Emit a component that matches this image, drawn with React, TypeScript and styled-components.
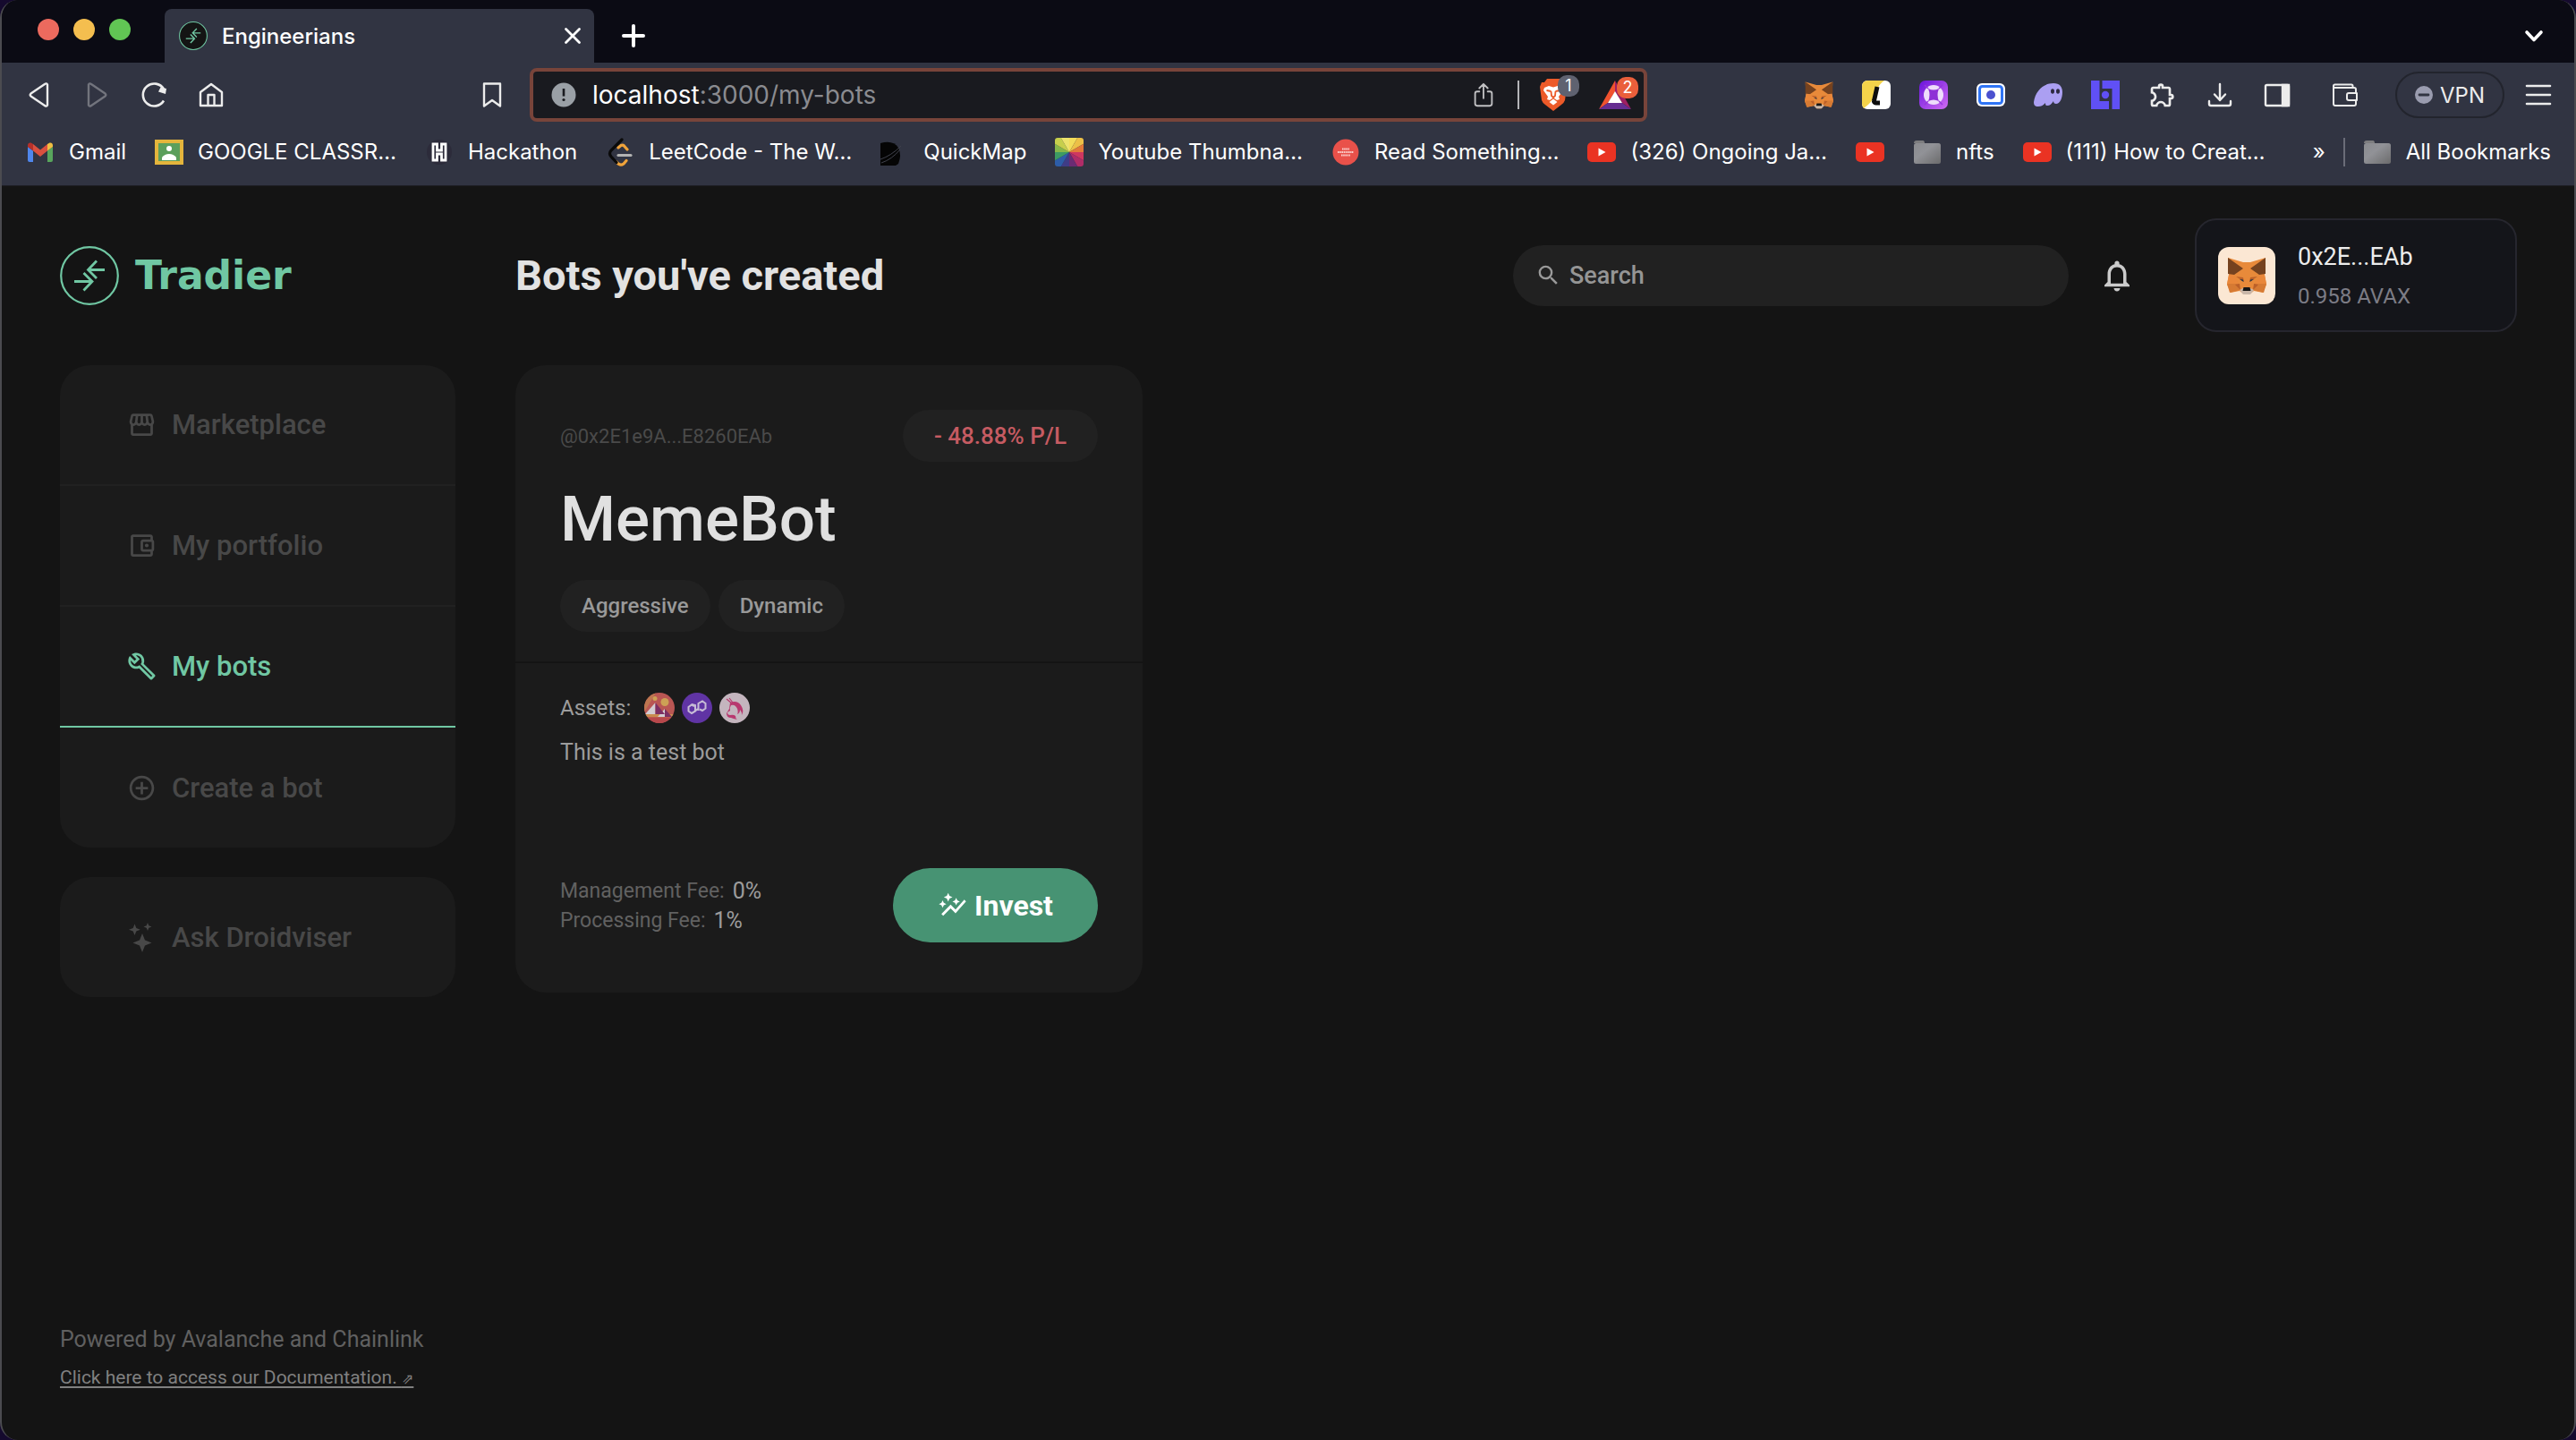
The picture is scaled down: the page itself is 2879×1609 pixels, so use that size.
import React from "react";
import styled, { createGlobalStyle } from "styled-components";
import {
  MdOutlineStorefront,
  MdOutlineAccountBalanceWallet,
  MdOutlineBuild,
  MdOutlineAddCircleOutline,
  MdOutlineAutoGraph,
  MdNotificationsNone,
  MdSearch,
  MdOutlineExtension,
} from "react-icons/md";
import { IoShareOutline } from "react-icons/io5";

const color = {
  page: "#141414",
  panel: "#1b1b1b",
  raised: "#212121",
  accent: "#70c7a3",
  chrome: "#313442",
  strip: "#0b0b14",
};

const GlobalStyle = createGlobalStyle`
  *, *::before, *::after { box-sizing: border-box; }
  body { margin: 0; background: #150a2e; }
  a { color: inherit; text-decoration: none; }
  button { padding: 0; border: 0; background: none; color: inherit; font: inherit; cursor: pointer; }
  h1, h2, p, dl, dd { margin: 0; font-weight: inherit; font-size: inherit; }
  svg { display: block; flex: none; }
`;

const Window = styled.div`
  display: flex;
  flex-direction: column;
  min-height: 100vh;
  overflow: hidden;
  border: solid #4b4b50;
  border-width: 0 2px;
  border-radius: 20px;
  background: ${color.page};
  font-family: Inter, sans-serif;
`;

/* ---------- browser chrome ---------- */

const TabStrip = styled.div`
  display: flex;
  align-items: center;
  height: 70px;
  padding: 0 29px 0 40px;
  background: ${color.strip};
  color: #fff;
`;

const Lights = styled.div`
  display: flex;
  gap: 16px;
  margin: 0 38px 4px 0;
`;

const Light = styled.button<{ $fill: string }>`
  width: 24px;
  height: 24px;
  border-radius: 50%;
  background: ${(p) => p.$fill};
`;

const Tab = styled.div`
  display: flex;
  align-items: center;
  gap: 16px;
  align-self: flex-end;
  width: 480px;
  height: 60px;
  padding: 0 14px 0 16px;
  border-radius: 8px 8px 0 0;
  background: ${color.chrome};
  font-size: 24px;
  font-weight: 500;
`;

const TabClose = styled.button`
  margin-left: auto;
`;

const NewTab = styled.button`
  margin-left: 28px;
  margin-top: 10px;
`;

const TabMenu = styled.button`
  margin-left: auto;
  margin-top: 10px;
`;

const Toolbar = styled.div`
  display: flex;
  align-items: center;
  height: 72px;
  padding: 0 24px 0 26px;
  background: ${color.chrome};
  color: #ececec;
`;

const NavButtons = styled.div`
  display: flex;
  gap: 32px;
  width: 538px;
  margin-right: 26px;

  button:last-child {
    margin-left: auto;
  }
`;

const IconButton = styled.button<{ $dim?: boolean }>`
  position: relative;
  flex: none;
  opacity: ${(p) => (p.$dim ? 0.35 : 1)};
`;

const AddressBar = styled.div`
  display: flex;
  flex: 1;
  align-items: center;
  height: 60px;
  padding: 0 14px 0 20px;
  border: 4px solid #78443a;
  border-radius: 8px;
  background: #191a1f;
`;

const Address = styled.div`
  flex: 1;
  margin-left: 18px;
  color: #fff;
  font-size: 28px;
  line-height: 40px;
  outline: none;
`;

const AddressPath = styled.span`
  color: #8a8b90;
`;

const AddressTools = styled.div`
  display: flex;
  align-items: center;
  color: #c0c0c2;
`;

const ToolRule = styled.i<{ $space: number; $tint: string }>`
  width: 2px;
  height: 32px;
  margin: 0 ${(p) => p.$space}px;
  background: ${(p) => p.$tint};
`;

const Shields = styled(IconButton)`
  width: 66px;
`;

const Badge = styled.span<{ $fill: string }>`
  position: absolute;
  top: -4px;
  left: 20px;
  min-width: 24px;
  height: 24px;
  border-radius: 10px;
  background: ${(p) => p.$fill};
  color: #fff;
  font-size: 18px;
  line-height: 24px;
  text-align: center;
`;

const Extensions = styled.div`
  display: flex;
  align-items: center;
  gap: 32px;
  margin-left: 176px;
`;

const VpnButton = styled.button`
  display: flex;
  align-items: center;
  justify-content: center;
  gap: 8px;
  width: 122px;
  height: 52px;
  margin: 0 -10px 0 8px;
  border: 2px solid #22242d;
  border-radius: 26px;
  font-size: 24px;
`;

const WalletSlot = styled.div`
  display: flex;
  margin-left: 12px;
`;

const BookmarkBar = styled.nav`
  display: flex;
  align-items: center;
  gap: 32px;
  height: 66px;
  padding: 0 26px 10px 27px;
  border-bottom: 1px solid #1d1e24;
  background: ${color.chrome};
  color: #fff;
  font-size: 24px;
  white-space: nowrap;
`;

const Bookmark = styled.a`
  display: flex;
  align-items: center;
  gap: 16px;
`;

const BookmarkEnd = styled.div`
  display: flex;
  align-items: center;
  margin-left: auto;
`;

/* ---------- application ---------- */

const Shell = styled.div`
  display: grid;
  flex: 1;
  grid-template: auto 1fr / 442px 1fr;
  gap: 37px 67px;
  padding: 36px 64px 50px 65px;
  font-family: Roboto, sans-serif;
`;

const Brand = styled.a`
  display: flex;
  align-items: center;
  gap: 18px;
  color: ${color.accent};
  font-family: "DejaVu Sans", sans-serif;
  font-size: 44px;
  font-weight: 700;
  line-height: 56px;
`;

const Header = styled.header`
  display: flex;
  align-items: center;
  min-height: 127px;
`;

const PageTitle = styled.h1`
  color: #e2e2e2;
  font-size: 47px;
  font-weight: 700;
  line-height: 56px;
`;

const SearchBox = styled.label`
  display: flex;
  align-items: center;
  gap: 9px;
  width: 621px;
  height: 68px;
  margin-left: auto;
  padding: 0 25px;
  border-radius: 34px;
  background: ${color.raised};
  color: #999;
`;

const SearchInput = styled.input`
  flex: 1;
  min-width: 0;
  padding: 0;
  border: 0;
  outline: none;
  background: none;
  color: #ddd;
  font: 500 27px/34px Roboto, sans-serif;

  &::placeholder {
    color: #959595;
    opacity: 1;
  }
`;

const BellButton = styled.button`
  margin: 0 66px 0 33px;
  color: #cbcbcb;
`;

const Account = styled.button`
  display: flex;
  align-items: center;
  gap: 25px;
  width: 360px;
  height: 127px;
  padding: 0 24px;
  border: 2px solid #26262e;
  border-radius: 24px;
  background: #14151a;
  text-align: left;
`;

const Avatar = styled.span`
  display: grid;
  place-items: center;
  width: 64px;
  height: 64px;
  border-radius: 12px;
  background: #fbe7d3;
`;

const AccountText = styled.span`
  padding-top: 3px;
  line-height: 44px;
`;

const AccountName = styled.span`
  display: block;
  color: #ececec;
  font-size: 27px;
`;

const AccountBalance = styled.span`
  display: block;
  color: #7c7c85;
  font-size: 24px;
`;

const Sidebar = styled.aside`
  display: flex;
  flex-direction: column;
  gap: 33px;
`;

const Menu = styled.nav`
  overflow: hidden;
  border-radius: 34px;
  background: ${color.panel};
`;

const MenuItem = styled.a<{ $active?: boolean }>`
  display: flex;
  align-items: center;
  gap: 17px;
  height: 135px;
  padding-left: 75px;
  border-bottom: 2px solid ${(p) => (p.$active ? color.accent : color.raised)};
  color: ${(p) => (p.$active ? color.accent : "#484848")};
  font-size: 31px;
  font-weight: 500;

  &:last-child {
    height: 134px;
    border-bottom: 0;
  }
`;

const Footer = styled.footer`
  margin-top: auto;
  color: #606060;
  font-size: 25px;
  line-height: 44px;
`;

const DocsLink = styled.a`
  display: block;
  color: #808080;
  font-size: 21px;
  line-height: 40px;
  text-decoration: underline;
  text-decoration-thickness: 2px;
  text-underline-offset: 3px;
`;

const SmallArrow = styled.span`
  font: 16px "DejaVu Sans", sans-serif;
`;

const BotGrid = styled.main`
  display: grid;
  grid-template-columns: repeat(3, 1fr);
  gap: 67px;
  align-items: start;
`;

const Card = styled.article`
  display: flex;
  flex-direction: column;
  aspect-ratio: 1;
  border-radius: 34px;
  background: ${color.panel};
`;

const CardTop = styled.div`
  padding: 50px 50px 33px;
  border-bottom: 2px solid ${color.page};
`;

const CardMeta = styled.div`
  display: flex;
  align-items: center;
  justify-content: space-between;
  color: #4a4a4a;
  font-size: 22px;
`;

const Pill = styled.span`
  display: inline-flex;
  align-items: center;
  height: 58px;
  padding: 0 24px;
  border-radius: 29px;
  background: ${color.raised};
  color: #999;
  font-size: 24px;
  font-weight: 500;
`;

const ProfitPill = styled(Pill)`
  padding: 0 35px;
  color: #c65b62;
  font-size: 26px;
`;

const BotName = styled.h2`
  padding-bottom: 4px;
  color: #e0e0e0;
  font-size: 71px;
  font-weight: 500;
  line-height: 128px;
`;

const Tags = styled.div`
  display: flex;
  gap: 9px;
`;

const CardBody = styled.div`
  display: flex;
  flex: 1;
  flex-direction: column;
  gap: 16px;
  padding: 33px 50px 56px;
  color: #9c9c9c;
  font-size: 25px;
  line-height: 34px;
`;

const Assets = styled.div`
  display: flex;
  align-items: center;
  gap: 8px;
  font-size: 24px;
`;

const AssetsLabel = styled.span`
  margin-right: 7px;
`;

const CardFoot = styled.div`
  display: flex;
  align-items: center;
  justify-content: space-between;
  margin-top: auto;
`;

const Fees = styled.dl`
  font-size: 23px;
  line-height: 33px;
`;

const Fee = styled.div`
  display: flex;
  gap: 9px;
  color: #616161;

  dd {
    color: #9c9c9c;
    font-size: 25px;
  }
`;

const InvestButton = styled.button`
  display: flex;
  align-items: center;
  justify-content: center;
  gap: 8px;
  width: 229px;
  height: 83px;
  border-radius: 42px;
  background: #479373;
  color: #fff;
  font-size: 32px;
  font-weight: 700;
`;

/* ---------- drawings ---------- */

const BrandMark = ({ size, fill = "none" }: { size: number; fill?: string }) => (
  <svg width={size} height={size} viewBox="0 0 66 66" fill={fill} stroke={color.accent} strokeWidth="2.2">
    <circle cx="33" cy="33" r="31.8" />
    <path d="M50 26.5H32M41 16.5 31.5 26.5 41 36M16 39.5h19M26.500 30 36 39.500 26.500 49.500" fill="none" strokeWidth="2.800" />
  </svg>
);

const Fox = ({ size }: { size: number }) => (
  <svg width={size} height={size} viewBox="0 0 44 42">
    <path d="M1 1l17 5h8l17-5-1 19 2 11-4 9-10-2-5 4h-6l-5-4-10 2-4-9 2-11z" fill="#e88a3a" />
    <path d="M1 1l17 12-10 7-7-1z M43 1L26 13l10 7 7-1z" fill="#75421f" />
    <path d="M2 20l6 0 5 10-13 0z M42 20h-6l-5 10h13z" fill="#e9873a" />
    <path d="M0 30h13l2 7-12 3z M44 30H31l-2 7 12 3z" fill="#d67a33" />
    <path d="M10 22l8 1 1 5z M34 22l-8 1-1 5z M9 31l6 6-1-7z M35 31l-6 6 1-7z" fill="#bb6029" />
    <path d="M14 25l4 .5.500 2.500z M30 25l-4 .5-.5 2.500z" fill="#233447" />
    <path d="M14 37l4-2h8l4 2-4 5h-8z" fill="#c9b7a9" />
    <path d="M18.500 34h7l1 4h-9z" fill="#161616" />
  </svg>
);

const Sparkles = () => (
  <svg width="33" height="33" viewBox="0 0 33 33" fill="currentColor">
    <path d="M17 12l3 7.500 7.500 3-7.500 3-3 7.500-3-7.500-7.500-3 7.500-3zM8.500 1.500l1.800 4.500 4.500 1.800-4.500 1.800-1.800 4.500-1.800-4.500L2 7.800 6.700 6zM23 0l1.300 3.200 3.200 1.300-3.200 1.300L23 9l-1.300-3.200-3.200-1.300 3.200-1.300z" />
  </svg>
);

const Line = ({ d, width = 2.4, size = 32 }: { d: string; width?: number; size?: number }) => (
  <svg width={size} height={size} viewBox="0 0 32 32" fill="none" stroke="currentColor" strokeWidth={width} strokeLinecap="round" strokeLinejoin="round">
    <path d={d} />
  </svg>
);

const Reload = () => (
  <svg width="32" height="32" viewBox="0 0 32 32" fill="none" stroke="currentColor" strokeWidth="2.600">
    <path d="M27 22.500a12.500 12.500 0 1 1 0-13" />
    <path d="M21 12.500l2.500-5 6.500 1.500-1 6z" fill="currentColor" stroke="none" />
  </svg>
);

const SidePanel = () => (
  <svg width="32" height="32" viewBox="0 0 32 32" fill="none" stroke="currentColor" strokeWidth="2.400">
    <rect x="3" y="5" width="26" height="23" rx="1.500" />
    <path d="M22 5h7v23h-7z" fill="currentColor" />
  </svg>
);

const WalletLine = () => (
  <Line width={2} d="M28 14V10a2 2 0 0 0-2-2H4M24.500 8V6a1.500 1.500 0 0 0-1.500-1.500H4.500A1.500 1.500 0 0 0 3 6v20a2 2 0 0 0 2 2h21a2 2 0 0 0 2-2v-4M29 14h-9a2 2 0 0 0-2 2v4a2 2 0 0 0 2 2h9z" />
);

const InfoDot = () => (
  <svg width="28" height="28" viewBox="0 0 28 28">
    <circle cx="14" cy="14" r="13.500" fill="#9aa0a6" />
    <path d="M14 7v8.500" stroke="#191a1f" strokeWidth="2.600" />
    <circle cx="14" cy="19.500" r="1.600" fill="#191a1f" />
  </svg>
);

const VpnDot = () => (
  <svg width="20" height="20" viewBox="0 0 20 20">
    <circle cx="10" cy="10" r="10" fill="#9a9caf" />
    <path d="M5 10h10" stroke="#313442" strokeWidth="2.800" strokeLinecap="round" />
  </svg>
);

const BraveLion = () => (
  <svg width="30" height="36" viewBox="0 0 30 36">
    <path d="M8 0h14l3 4 3 0 2 5-2 15q-1 3-4 5l-9 7-9-7q-3-2-4-5L0 9l2-5h3z" fill="#ec5a29" />
    <path d="M5 10l5-2 5 1.500L20 8l5 2 1 3-5 7 1 3-3 1-4-3-4 3-3-1 1-3-5-7z" fill="#fff" />
    <path d="M10.500 26l4.500-3.500 4.500 3.500-4.500 3.500z" fill="#fff" />
    <path d="M7.500 13l5 1M22.500 13l-5 1M12.500 14l.5 5 2 2 2-2 .5-5" fill="none" stroke="#ec5a29" strokeWidth="1.800" />
  </svg>
);

const BatTriangle = () => (
  <svg width="36" height="32" viewBox="0 0 36 32">
    <path d="M18 0v12.500L10 25 0 32z" fill="#f0522f" />
    <path d="M18 0l18 32-10-7-8-12.500z" fill="#9e1f63" />
    <path d="M0 32l10-7h16l10 7z" fill="#662d91" />
    <path d="M18 12l8 13H10z" fill="#fff" />
  </svg>
);

const YellowL = () => (
  <svg width="32" height="32" viewBox="0 0 32 32">
    <rect width="32" height="32" rx="6" fill="#fff" />
    <path d="M6 0h19C19 4 17 9 14 17c-2 6-7 10-12 14-1-1-2-3-2-5V6a6 6 0 0 1 6-6z" fill="#f4d34a" />
    <path d="M17 7l-3.500 15.500a2 2 0 0 0 2 2.500H20" fill="none" stroke="#0e0e0e" strokeWidth="5" />
  </svg>
);

const PurpleRing = () => (
  <svg width="32" height="32" viewBox="0 0 32 32">
    <defs>
      <linearGradient id="ring" x1="0" y1="0" x2="1" y2="1">
        <stop offset="0" stopColor="#6a14dc" />
        <stop offset="1" stopColor="#cf6cf2" />
      </linearGradient>
    </defs>
    <rect width="32" height="32" rx="7" fill="url(#ring)" />
    <circle cx="16" cy="16" r="11" fill="#eedcfb" />
    <path d="M10 9q6 3 12 0-3 7 0 14-6-3-12 0 3-7 0-14z" fill="#8f2fd6" />
    <path d="M10 9L6 5M22 9l4-4M10 23l-4 4M22 23l4 4" stroke="#9636dc" strokeWidth="1.500" />
  </svg>
);

const BlueCam = () => (
  <svg width="32" height="32" viewBox="0 0 32 32">
    <rect y="3" width="32" height="26" rx="6" fill="#fff" />
    <rect x="3.500" y="6.500" width="25" height="19" rx="3" fill="#fff" stroke="#2f74f5" strokeWidth="3" />
    <circle cx="16" cy="16" r="5" fill="#4b51cf" />
  </svg>
);

const Ghost = () => (
  <svg width="32" height="32" viewBox="0 0 32 32">
    <path d="M0 24C2 11 11 3 22 3c7 0 10 4 10 10 0 7-3 13-7 13-2 0-3-1-3-3-2 3-4 5-7 5-2 0-2-1-2-3-3 3-5 4-8 4-4 0-5-2-5-5z" fill="#ab9ff2" />
    <ellipse cx="21" cy="12" rx="2" ry="2.800" fill="#2d2a40" />
    <ellipse cx="27" cy="12" rx="2" ry="2.800" fill="#2d2a40" />
  </svg>
);

const PurpleL = () => (
  <svg width="32" height="32" viewBox="0 0 32 32" fill="#6050f5">
    <path d="M0 0h9.500v23H20v9H0zM12.500 0H32v32h-8.500V9h-11z" />
    <circle cx="16" cy="16" r="4.200" />
  </svg>
);

const Gmail = () => (
  <svg width="32" height="32" viewBox="0 0 32 32">
    <path d="M2 10l6 4.500V27H4a2 2 0 0 1-2-2z" fill="#4f86ec" />
    <path d="M30 10l-6 4.500V27h4a2 2 0 0 0 2-2z" fill="#58a55c" />
    <path d="M8 7l8 6.500L24 7v7.500L16 21l-8-6.500z" fill="#d9503f" />
    <path d="M2 8.500C2 5 5.500 4.500 8 7v7.500L2 10z" fill="#b5312a" />
    <path d="M30 8.500C30 5 26.500 4.500 24 7v7.500l6-4.500z" fill="#f0be42" />
  </svg>
);

const Classroom = () => (
  <svg width="32" height="32" viewBox="0 0 32 32">
    <path d="M0 2h32v28H0z" fill="#e4b53c" />
    <path d="M4 6h24v20H4z" fill="#5c9f5c" />
    <circle cx="16" cy="12" r="3" fill="#fff" />
    <path d="M8 25v-3q3-4 8-4t8 4v3z" fill="#fff" />
  </svg>
);

const HackMark = () => (
  <svg width="32" height="32" viewBox="0 0 32 32">
    <circle cx="16" cy="16" r="14" fill="#2c2b3a" />
    <path d="M9 7h4.500v7h5V7H23v18h-4.500v-7h-5v7H9z" fill="#2c2b3a" stroke="#fff" strokeWidth="2.800" />
  </svg>
);

const Leet = () => (
  <svg width="32" height="32" viewBox="0 0 32 32" fill="none" strokeLinecap="round" strokeWidth="3.200">
    <path d="M14 11l3-2.500q2-1 3.500.5L24 13M12 27q4 5 8 2l3-3.500" stroke="#f0a33a" />
    <path d="M18 2L6 14q-3 3.500 0 7l6 6.500" stroke="#0a0a0a" />
    <path d="M14 19.500h14" stroke="#b3b3b3" />
  </svg>
);

const Quick = () => (
  <svg width="32" height="32" viewBox="0 0 32 32">
    <path d="M0 6q14-4 20 5 4 8 0 18l-3 2H0z" fill="#050505" />
    <path d="M0 24Q12 20 23 9M1 28q12-4 21-15" stroke="#40424c" fill="none" />
  </svg>
);

const wheel = ["#f3dc5a", "#edc047", "#e2793a", "#cf3760", "#b02c68", "#6a2b73", "#3f3c86", "#2d5da8", "#3d9a63", "#86b64a", "#c6cf4c", "#ece36c"];

const ColorWheel = () => (
  <svg width="32" height="32" viewBox="0 0 32 32">
    <clipPath id="wheel"><rect width="32" height="32" rx="3" /></clipPath>
    <g clipPath="url(#wheel)">
      {wheel.map((fill, i) => (
        <path key={fill} d="M16 16V-10L31 -10z" fill={fill} transform={`rotate(${i * 30} 16 16)`} />
      ))}
    </g>
  </svg>
);

const ReadDot = () => (
  <svg width="32" height="32" viewBox="0 0 32 32">
    <circle cx="16" cy="16" r="14.500" fill="#e9514a" />
    <path d="M12 12.500h8M7 16h18M11 19.500h10" stroke="#fbd0cc" strokeWidth="1.800" strokeDasharray="1.600 .6" />
  </svg>
);

const YouTube = () => (
  <svg width="32" height="32" viewBox="0 0 32 32">
    <rect y="5" width="32" height="22" rx="5" fill="#ea3323" />
    <path d="M12.500 11.500v9l8-4.500z" fill="#fff" />
  </svg>
);

const Folder = () => (
  <svg width="32" height="32" viewBox="0 0 32 32">
    <defs>
      <linearGradient id="folder" x1="0" y1="0" x2="1" y2="1">
        <stop offset="0" stopColor="#8a8b8f" />
        <stop offset=".4" stopColor="#919297" />
        <stop offset="1" stopColor="#6b6b6c" />
      </linearGradient>
    </defs>
    <path d="M1 6q0-3 3-3h7q2 0 2 3z" fill="#7d7d7f" />
    <rect x="1" y="6" width="30" height="23" rx="2.500" fill="url(#folder)" />
  </svg>
);

const Decentraland = () => (
  <svg width="34" height="34" viewBox="0 0 34 34">
    <clipPath id="mana"><circle cx="17" cy="17" r="17" /></clipPath>
    <g clipPath="url(#mana)">
      <path d="M0 0h34v34H0z" fill="#b95653" />
      <path d="M0 22L13 0H0z" fill="#bd7650" />
      <path d="M0 24h34v3.500H0z" fill="#c98c50" />
      <path d="M0 27.500h34V34H0z" fill="#b8484c" />
      <circle cx="12" cy="6.500" r="2.500" fill="#cda155" />
      <circle cx="23" cy="10.500" r="4.500" fill="#cda155" />
      <path d="M12.500 11L1 24h11.500zM23 18l-8 9h8z" fill="#d3cdd2" />
      <path d="M12.500 11L23 24H12.500zM23 18l8 9h-8z" fill="#7c2f63" />
    </g>
  </svg>
);

const Polygon = () => (
  <svg width="34" height="34" viewBox="0 0 34 34">
    <circle cx="17" cy="17" r="17" fill="#6034a4" />
    <path d="M14 15l-3-1.500L7.500 16v4.500l3.500 2.500 4-2.500 3.500-3M20 18.500l3 1.500 3.500-2.500V12L23 9.500 18.500 12v8" fill="none" stroke="#c7bcd6" strokeWidth="2" />
    <path d="M11 23l4-2.500V14l-4-1" fill="none" stroke="#c7bcd6" strokeWidth="2" />
  </svg>
);

const Uniswap = () => (
  <svg width="34" height="34" viewBox="0 0 34 34">
    <circle cx="17" cy="17" r="17" fill="#c4b5be" />
    <path d="M8 7l6 5M11 6l4 5" stroke="#b8386f" strokeWidth="1.200" />
    <path d="M12 11q8-3 12 3 4 6 1 11 0-4-2-6 0 4-3 5 2-5-2-9-2-2-5-1-2 3-1 6l-3 2q0 3 3 3 4-1 6 1 0 3 2 4-5-1-7-2-5 0-5-5l3-5z" fill="#b8386f" />
  </svg>
);

/* ---------- page ---------- */

const bookmarks = [
  { label: "Gmail", icon: <Gmail /> },
  { label: "GOOGLE CLASSR…", icon: <Classroom /> },
  { label: "Hackathon", icon: <HackMark /> },
  { label: "LeetCode - The W…", icon: <Leet /> },
  { label: "QuickMap", icon: <Quick /> },
  { label: "Youtube Thumbna…", icon: <ColorWheel /> },
  { label: "Read Something…", icon: <ReadDot /> },
  { label: "(326) Ongoing Ja…", icon: <YouTube /> },
  { label: "", icon: <YouTube /> },
  { label: "nfts", icon: <Folder /> },
  { label: "(111) How to Creat…", icon: <YouTube /> },
];

const extensions = [
  { name: "MetaMask", icon: <Fox size={32} /> },
  { name: "Notes", icon: <YellowL /> },
  { name: "Ring wallet", icon: <PurpleRing /> },
  { name: "Recorder", icon: <BlueCam /> },
  { name: "Phantom", icon: <Ghost /> },
  { name: "Ledger link", icon: <PurpleL /> },
  { name: "Extensions", icon: <MdOutlineExtension size={32} /> },
  { name: "Downloads", icon: <Line d="M16 4v18M10 15.500l6 6.500 6-6.500M4 23v3q0 2 2 2h20q2 0 2-2v-3" /> },
  { name: "Side panel", icon: <SidePanel /> },
];

const menu = [
  { label: "Marketplace", icon: <MdOutlineStorefront size={33} /> },
  { label: "My portfolio", icon: <MdOutlineAccountBalanceWallet size={33} /> },
  { label: "My bots", icon: <MdOutlineBuild size={33} />, active: true },
  { label: "Create a bot", icon: <MdOutlineAddCircleOutline size={33} /> },
];

const Chrome = () => (
  <>
    <TabStrip>
      <Lights>
        <Light $fill="#ec6a5e" aria-label="Close window" />
        <Light $fill="#f4be4f" aria-label="Minimise window" />
        <Light $fill="#61c554" aria-label="Zoom window" />
      </Lights>
      <Tab>
        <BrandMark size={32} fill="#141414" />
        Engineerians
        <TabClose aria-label="Close tab">
          <Line size={20} width={4.500} d="M4 4l24 24M28 4L4 28" />
        </TabClose>
      </Tab>
      <NewTab aria-label="New tab">
        <Line size={32} width={4} d="M16 5v22M5 16h22" />
      </NewTab>
      <TabMenu aria-label="Search tabs">
        <Line size={32} width={3.600} d="M8 12l8 8.500 8-8.500" />
      </TabMenu>
    </TabStrip>

    <Toolbar>
      <NavButtons>
        <IconButton aria-label="Back"><Line d="M25 4.500v23q-1 2-3 .5L6.500 17.500q-1.500-1.500 0-3L22 4q2-1.500 3 .5z" /></IconButton>
        <IconButton $dim aria-label="Forward"><Line d="M7 4.500v23q1 2 3 .5l15.500-10.500q1.500-1.500 0-3L10 4Q8 2.500 7 4.500z" /></IconButton>
        <IconButton aria-label="Reload"><Reload /></IconButton>
        <IconButton aria-label="Home"><Line d="M4 13L16 4l12 9v15H4zM12.500 28V16h7v12" /></IconButton>
        <IconButton aria-label="Bookmark page"><Line d="M7 3.500h18v25l-9-6.500-9 6.500z" /></IconButton>
      </NavButtons>
      <AddressBar>
        <InfoDot />
        <Address role="textbox" aria-label="Address" contentEditable suppressContentEditableWarning spellCheck={false}>
          localhost<AddressPath>:3000/my-bots</AddressPath>
        </Address>
        <AddressTools>
          <IconButton aria-label="Share"><IoShareOutline size={30} /></IconButton>
          <ToolRule $space={23} $tint="#b5b5b8" />
          <Shields aria-label="Shields"><BraveLion /><Badge $fill="#5f6270">1</Badge></Shields>
          <IconButton aria-label="Rewards"><BatTriangle /><Badge $fill="#ea5f3b">2</Badge></IconButton>
        </AddressTools>
      </AddressBar>
      <Extensions>
        {extensions.map((e) => (
          <IconButton key={e.name} aria-label={e.name}>{e.icon}</IconButton>
        ))}
        <WalletSlot><IconButton aria-label="Wallet"><WalletLine /></IconButton></WalletSlot>
        <VpnButton><VpnDot />VPN</VpnButton>
        <IconButton aria-label="Menu"><Line width={2.600} d="M3 6h26M3 16h26M3 26h26" /></IconButton>
      </Extensions>
    </Toolbar>

    <BookmarkBar aria-label="Bookmarks">
      {bookmarks.map((b, i) => (
        <Bookmark key={i} href="#" aria-label={b.label || "YouTube"}>
          {b.icon}
          {b.label}
        </Bookmark>
      ))}
      <BookmarkEnd>
        <button aria-label="More bookmarks">»</button>
        <ToolRule $space={20} $tint="#6a6c78" />
        <Bookmark href="#"><Folder />All Bookmarks</Bookmark>
      </BookmarkEnd>
    </BookmarkBar>
  </>
);

export default function App() {
  return (
    <>
      <GlobalStyle />
      <Window>
        <Chrome />
        <Shell>
          <Brand href="#"><BrandMark size={66} />Tradier</Brand>
          <Header>
            <PageTitle>Bots you've created</PageTitle>
            <SearchBox>
              <MdSearch size={29} />
              <SearchInput type="search" placeholder="Search" aria-label="Search" />
            </SearchBox>
            <BellButton aria-label="Notifications"><MdNotificationsNone size={42} /></BellButton>
            <Account>
              <Avatar><Fox size={44} /></Avatar>
              <AccountText>
                <AccountName>0x2E...EAb</AccountName>
                <AccountBalance>0.958 AVAX</AccountBalance>
              </AccountText>
            </Account>
          </Header>

          <Sidebar>
            <Menu>
              {menu.map((m) => (
                <MenuItem key={m.label} href="#" $active={m.active}>{m.icon}{m.label}</MenuItem>
              ))}
            </Menu>
            <Menu>
              <MenuItem href="#"><Sparkles />Ask Droidviser</MenuItem>
            </Menu>
            <Footer>
              <p>Powered by Avalanche and Chainlink</p>
              <DocsLink href="#">Click here to access our Documentation. <SmallArrow>⇗</SmallArrow></DocsLink>
            </Footer>
          </Sidebar>

          <BotGrid>
            <Card>
              <CardTop>
                <CardMeta>
                  @0x2E1e9A...E8260EAb
                  <ProfitPill>- 48.88% P/L</ProfitPill>
                </CardMeta>
                <BotName>MemeBot</BotName>
                <Tags>
                  <Pill>Aggressive</Pill>
                  <Pill>Dynamic</Pill>
                </Tags>
              </CardTop>
              <CardBody>
                <Assets>
                  <AssetsLabel>Assets:</AssetsLabel>
                  <Decentraland />
                  <Polygon />
                  <Uniswap />
                </Assets>
                <p>This is a test bot</p>
                <CardFoot>
                  <Fees>
                    <Fee><dt>Management Fee:</dt><dd>0%</dd></Fee>
                    <Fee><dt>Processing Fee:</dt><dd>1%</dd></Fee>
                  </Fees>
                  <InvestButton><MdOutlineAutoGraph size={33} />Invest</InvestButton>
                </CardFoot>
              </CardBody>
            </Card>
          </BotGrid>
        </Shell>
      </Window>
    </>
  );
}
